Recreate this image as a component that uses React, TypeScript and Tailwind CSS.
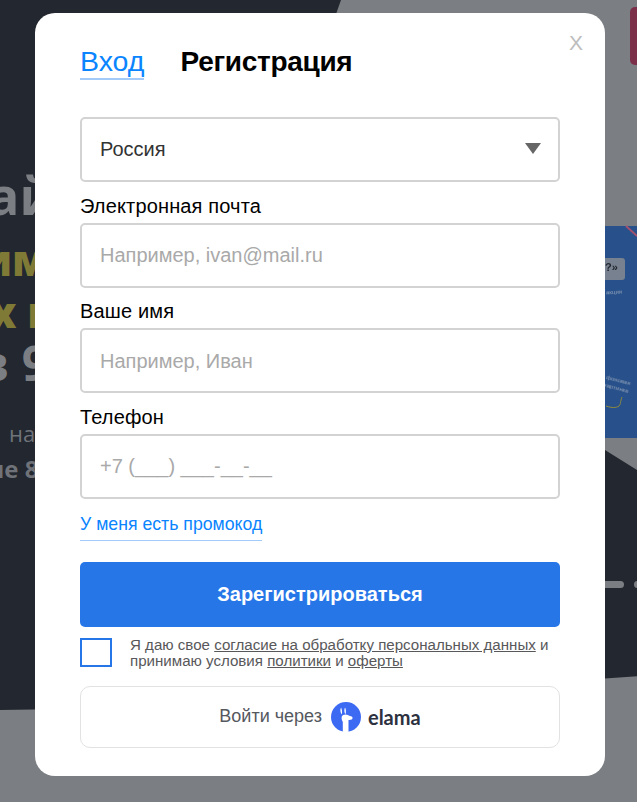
import React from 'react';

const sans = "font-['Liberation_Sans',Arial,sans-serif]";

const Field = ({ label, placeholder }: { label: string; placeholder: string }) => (
  <div className="mt-[11.5px]">
    <div className="text-[20px] leading-[24px] tracking-[0.15px] text-black mb-[5px]">{label}</div>
    <div className="h-[65px] rounded-[5px] border-2 border-[#d3d3d3] flex items-center pl-[18px] text-[20px] text-[#a9a9a9]">
      {placeholder}
    </div>
  </div>
);

// Lama mark of the elama button
const ElamaLogo = () => (
  <svg width="30" height="30" viewBox="0 0 30 30">
    <circle cx="15" cy="15" r="15" fill="#3d6af2" />
    <path d="M10 5.500c1 1.500 1.300 4.500.8 7-1.400-1.500-1.900-5-.8-7zM14 5.500c1 1.500 1.200 4.500.6 6.800-1.400-1.500-1.700-4.800-.6-6.800z" fill="#fff" />
    <path d="M10.800 14.500c.6-1.800 3.800-2.800 6-1.500 1.300.8 3 1.200 4.200 1.700.8.400.7 2.300-.3 2.800-1 .4-2.200.5-3.200.4V30H11.800V20c-1-1.800-1.500-3.800-1-5.500z" fill="#fff" />
  </svg>
);

export default function App() {
  return (
    <div className={`relative w-[637px] h-[802px] overflow-hidden bg-[#7b7e82] ${sans}`}>
      {/* page behind the overlay */}
      <svg className="absolute inset-0" width="637" height="802" viewBox="0 0 637 802">
        <polygon points="0,0 341,0 270,200 200,707 0,710" fill="#23272f" />
        <polygon points="200,707 640,676 640,472 605,450 400,300" fill="#23272f" />
        <rect x="630" y="7" width="12" height="58" rx="5" fill="#7c2f49" />
        <rect x="600" y="226" width="40" height="212" fill="#28508a" />
        <rect x="590" y="258" width="35" height="22" rx="3" fill="#77818f" />
        <line x1="626" y1="226" x2="637" y2="236" stroke="#a0526f" strokeWidth="2" />
        <path d="M606 406c6 2 10 2 13 0 2-2 1-4 3-9" fill="none" stroke="#8f8c3c" strokeWidth="1" />
        <rect x="590" y="581" width="34" height="7" rx="3.500" fill="#7b7e82" />
        <rect x="634" y="581" width="10" height="7" rx="3.500" fill="#7b7e82" />
      </svg>

      <div className="absolute left-0 top-[165px] flex flex-col whitespace-nowrap font-['Open_Sans',sans-serif]">
        <div className="ml-[-12px] h-[71px] text-[52px] leading-[60px] font-bold text-[#7b7e82]">ай</div>
        <div className="ml-[-18px] h-[52px] text-[42px] leading-[48px] font-extrabold text-[#7f7a36]">им</div>
        <div className="ml-[-10px] h-[49px] text-[42px] leading-[48px] font-extrabold text-[#7f7a36]">х н</div>
        <div className="ml-[-21px] h-[81px] text-[48px] leading-[52px] font-bold text-[#7b7e82]">в 9</div>
        <div className="ml-[9px] h-[35px] text-[22px] leading-[30px] text-[#6f7379]">на</div>
        <div className="ml-[-13px] text-[24px] leading-[32px] font-bold text-[#6f7379]">ие 8</div>
      </div>
      <div className="absolute left-[605px] top-[260px] text-[11px] leading-[14px] font-bold text-[#23272f] blur-[0.4px]">?»</div>
      <div className="absolute left-[606px] top-[288px] text-[6px] leading-[8px] text-[#8fa0b8] rotate-[-3deg] blur-[0.3px]">акция</div>
      <div className="absolute left-[605px] top-[376px] text-[6px] leading-[8px] text-[#8fa0b8] rotate-[15deg] blur-[0.3px]">фоновая<br />картинка</div>

      {/* modal */}
      <div className="relative flex pl-[35px] pt-[13px]">
        <div className="relative w-[570px] h-[763px] bg-white rounded-[20px] px-[45px] pt-[31px]">
          <div className="absolute right-[22px] top-[18px] text-[21px] leading-[24px] text-[#bdbdbd]">X</div>

          <div className="flex items-start gap-[36px] h-[37px]">
            <div className="text-[28.500px] leading-[35px] h-[36px] text-[#0a84ff] border-b-2 border-[#a3cbfa]">Вход</div>
            <div className="text-[28px] leading-[35px] tracking-[-0.3px] font-bold text-black">Регистрация</div>
          </div>

          <div className="mt-[36px] h-[65px] pb-[2px] rounded-[5px] border-2 border-[#d3d3d3] flex items-center justify-between pl-[18px] pr-[17px] text-[20px] text-[#333]">
            Россия
            <svg width="16" height="11" viewBox="0 0 16 11"><polygon points="0,0 16,0 8,11" fill="#666" /></svg>
          </div>

          <Field label="Электронная почта" placeholder="Например, ivan@mail.ru" />
          <Field label="Ваше имя" placeholder="Например, Иван" />
          <Field label="Телефон" placeholder="+7 (___) ___-__-__" />

          <div className="mt-[14px] w-fit text-[17.700px] leading-[22px] h-[28px] text-[#0a84ff] border-b border-[#a3cbfa]">У меня есть промокод</div>

          <div className="mt-[21px] h-[65px] rounded-[5px] bg-[#2676e8] flex items-center justify-center text-white font-bold text-[20px]">
            Зарегистрироваться
          </div>

          <div className="mt-[10px] flex gap-[18px]">
            <div className="w-[32px] h-[29px] mt-px border-[2px] border-[#2676e8] shrink-0" />
            <div className="text-[15.100px] leading-[16px] text-[#58585a]">
              Я даю свое <span className="underline">согласие на обработку персональных данных</span> и<br />
              принимаю условия <span className="underline">политики</span> и <span className="underline">оферты</span>
            </div>
          </div>

          <div className="mt-[17px] h-[62px] rounded-[10px] border border-[#e2e2e2] flex items-center justify-center gap-[9px] text-[18px] text-[#55585e]">
            Войти через
            <ElamaLogo />
            <span className="-ml-[2px] font-['Lato',sans-serif] font-bold text-[20px] text-[#2d3140]">elama</span>
          </div>
        </div>
      </div>
    </div>
  );
}
